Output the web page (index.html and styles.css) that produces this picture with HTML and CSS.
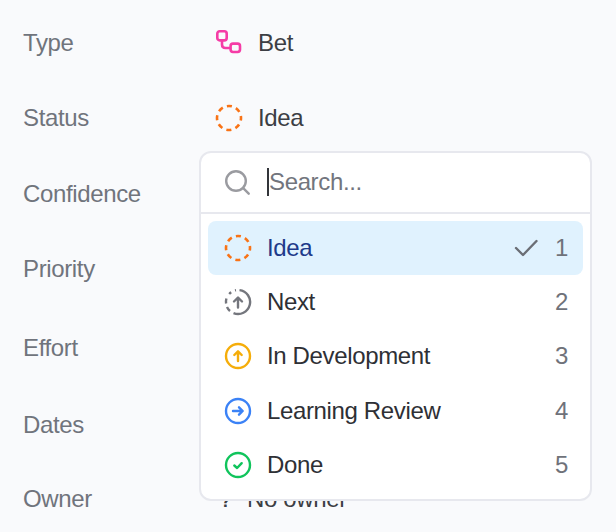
FILE: index.html
```html
<!DOCTYPE html>
<html lang="en">
<head>
<meta charset="utf-8">
<title>Status picker</title>
<link rel="stylesheet" href="styles.css">
</head>
<body>
<main class="panel">
  <div class="props">
    <div class="row row-type"><span class="label">Type</span>
      <span class="value"><svg class="ic" viewBox="0 0 28 28" fill="none" stroke="#f53ca6" stroke-width="2.600"><rect x="2.300" y="2.300" width="9.400" height="9.100" rx="2.400"/><rect x="15.600" y="14.600" width="9.400" height="8.400" rx="2.400"/><path d="M7 11.500v4q0 3.500 3.500 3.500h5"/></svg><span>Bet</span></span></div>
    <div class="row row-status"><span class="label">Status</span>
      <span class="value"><svg class="ic" viewBox="0 0 28 28" fill="none" stroke="#f97316" stroke-width="2.600"><circle cx="14" cy="14" r="12" stroke-dasharray="5.1 4.33" stroke-dashoffset="2.550"/></svg><span>Idea</span></span></div>
    <div class="row row-conf"><span class="label">Confidence</span></div>
    <div class="row row-prio"><span class="label">Priority</span></div>
    <div class="row row-effort"><span class="label">Effort</span></div>
    <div class="row row-dates"><span class="label">Dates</span></div>
    <div class="row row-owner"><span class="label">Owner</span>
      <span class="value value-owner"><span class="unk">?</span><span>No owner</span></span></div>
  </div>

  <div class="popover">
    <div class="search">
      <svg class="search-ic" viewBox="0 0 25 25" fill="none" stroke="#9a9ba0" stroke-width="2.400" stroke-linecap="round"><circle cx="11" cy="11" r="9.800"/><path d="M18.200 18.200l5.500 5.500"/></svg>
      <span class="caret"></span><span class="ph">Search...</span>
    </div>
    <ul class="list">
      <li class="item active">
        <svg class="ic" viewBox="0 0 28 28" fill="none" stroke="#f97316" stroke-width="2.600"><circle cx="14" cy="14" r="12" stroke-dasharray="5.1 4.33" stroke-dashoffset="2.550"/></svg>
        <span class="name">Idea</span>
        <svg class="check" viewBox="0 0 24 18" fill="none" stroke="#6b6e75" stroke-width="2.400" stroke-linecap="round" stroke-linejoin="round"><path d="M2 9l7 7L22.500 2"/></svg>
        <span class="num">1</span>
      </li>
      <li class="item">
        <svg class="ic" viewBox="0 0 28 28" fill="none" stroke="#74767d" stroke-width="2.400"><path d="M15.500 2.100A12 12 0 1 1 9.500 25.100"/><path d="M6 23a12 12 0 0 1-3-4M2.100 15.500a12 12 0 0 1 .3-5M5.200 6a12 12 0 0 1 2-1.700M11 2.400a12 12 0 0 1 1-.2"/><path d="M14 19.500v-9.500M10 13.500L14 9.500l4 4" stroke-linecap="round" stroke-linejoin="round"/></svg>
        <span class="name">Next</span>
        <span class="num">2</span>
      </li>
      <li class="item">
        <svg class="ic" viewBox="0 0 28 28" fill="none" stroke="#f5ad0a" stroke-width="2.400"><circle cx="14" cy="14" r="12"/><path d="M14 19v-9.500M10.300 13L14 9.300l3.700 3.700" stroke-linecap="round" stroke-linejoin="round"/></svg>
        <span class="name">In Development</span>
        <span class="num">3</span>
      </li>
      <li class="item">
        <svg class="ic" viewBox="0 0 28 28" fill="none" stroke="#3b82f6" stroke-width="2.400"><circle cx="14" cy="14" r="12"/><path d="M9 14h9.500M15 10.300L18.700 14 15 17.700" stroke-linecap="round" stroke-linejoin="round"/></svg>
        <span class="name">Learning Review</span>
        <span class="num">4</span>
      </li>
      <li class="item">
        <svg class="ic" viewBox="0 0 28 28" fill="none" stroke="#10c45c" stroke-width="2.400"><circle cx="14" cy="14" r="12"/><path d="M10.300 14.500l2.800 2.500 4.600-4.800" stroke-linecap="round" stroke-linejoin="round"/></svg>
        <span class="name">Done</span>
        <span class="num">5</span>
      </li>
    </ul>
  </div>
</main>
</body>
</html>
```
FILE: styles.css
```css
* { box-sizing: border-box; }
html, body { margin: 0; height: 100%; }
body {
  background: #f9fafc;
  font-family: "Liberation Sans", Arial, sans-serif;
  font-size: 24px;
  letter-spacing: -0.36px;
  overflow: hidden;
}
.panel { position: relative; width: 616px; height: 532px; overflow: hidden; }
.props { padding: 25px 0 0 23px; display: flex; flex-direction: column; }
.row { display: flex; align-items: center; height: 36px; }
.row-type, .row-conf { margin-bottom: 39px; }
.row-status { margin-bottom: 40px; }
.row-prio { margin-bottom: 43px; }
.row-effort { margin-bottom: 41px; }
.row-dates { margin-bottom: 38px; }
.label { width: 192px; color: #70747c; }
.value { display: flex; align-items: center; gap: 15px; color: #3c3e44; }
.value-owner { gap: 11px; align-items: baseline; }
.ic { width: 28px; height: 28px; flex: none; }
.unk { width: 21px; text-align: center; font-size: 18px; font-weight: 700; }
.popover {
  position: absolute; left: 199px; top: 151px; width: 393px; height: 350px;
  background: #fff; border: 2px solid #e7e8ee; border-radius: 12px;
}
.search { height: 61px; border-bottom: 2px solid #e7e8ee; display: flex; align-items: center; padding: 0 0 2px 24px; }
.search-ic { width: 25px; height: 25px; flex: none; margin: 2px 17px 0 0; }
.caret { width: 2px; height: 28px; background: #33353a; flex: none; }
.ph { color: #72757d; }
.list { list-style: none; margin: 0; padding: 7px 7px; }
.item { height: 54.2px; display: flex; align-items: center; padding: 0 15px 0 15.500px; border-radius: 8px; color: #2e3035; }
.item .ic { margin-right: 15.500px; }
.item.active { background: #e0f2fe; color: #1e3a8a; }
.name { flex: 1; }
.check { width: 24px; height: 18px; margin-right: 17px; flex: none; }
.num { color: #6f727a; }
```
